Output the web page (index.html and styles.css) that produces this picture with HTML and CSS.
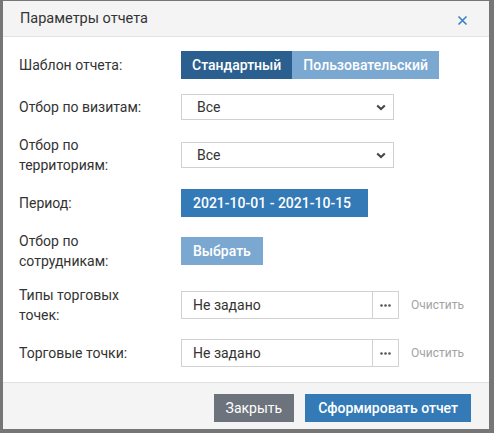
FILE: index.html
```html
<!DOCTYPE html>
<html lang="ru">
<head>
<meta charset="utf-8">
<link rel="stylesheet" href="styles.css">
</head>
<body>
<div class="dialog">
  <div class="dlg-header">
    <div class="dlg-title">Параметры отчета</div>
    <div class="dlg-close">
      <svg width="11" height="11" viewBox="0 0 11 11"><path d="M1.5 1.5 L9.5 9.5 M9.5 1.5 L1.5 9.5" stroke="#3b7fc4" stroke-width="1.6" fill="none"/></svg>
    </div>
  </div>
  <div class="dlg-body">
    <div class="row">
      <div class="label">Шаблон отчета:</div>
      <div class="control">
        <div class="btn-group">
          <span class="btn btn-dark">Стандартный</span><span class="btn btn-light">Пользовательский</span>
        </div>
      </div>
    </div>
    <div class="row">
      <div class="label">Отбор по визитам:</div>
      <div class="control">
        <div class="select"><span>Все</span>
          <svg width="10" height="7" viewBox="0 0 10 7"><path d="M1.2 1.4 L5 5 L8.8 1.4" stroke="#444" stroke-width="2" fill="none"/></svg>
        </div>
      </div>
    </div>
    <div class="row tall">
      <div class="label">Отбор по<br>территориям:</div>
      <div class="control">
        <div class="select"><span>Все</span>
          <svg width="10" height="7" viewBox="0 0 10 7"><path d="M1.2 1.4 L5 5 L8.8 1.4" stroke="#444" stroke-width="2" fill="none"/></svg>
        </div>
      </div>
    </div>
    <div class="row">
      <div class="label">Период:</div>
      <div class="control">
        <span class="btn btn-primary btn-period">2021-10-01 - 2021-10-15</span>
      </div>
    </div>
    <div class="row tall">
      <div class="label">Отбор по<br>сотрудникам:</div>
      <div class="control">
        <span class="btn btn-light">Выбрать</span>
      </div>
    </div>
    <div class="row tall">
      <div class="label">Типы торговых<br>точек:</div>
      <div class="control">
        <div class="input-group">
          <div class="input">Не задано</div>
          <div class="dots"><svg width="11" height="3" viewBox="0 0 11 3"><circle cx="1.5" cy="1.5" r="1.3" fill="#555"/><circle cx="5.5" cy="1.5" r="1.3" fill="#555"/><circle cx="9.5" cy="1.5" r="1.3" fill="#555"/></svg></div>
        </div>
        <span class="clear">Очистить</span>
      </div>
    </div>
    <div class="row">
      <div class="label">Торговые точки:</div>
      <div class="control">
        <div class="input-group">
          <div class="input">Не задано</div>
          <div class="dots"><svg width="11" height="3" viewBox="0 0 11 3"><circle cx="1.5" cy="1.5" r="1.3" fill="#555"/><circle cx="5.5" cy="1.5" r="1.3" fill="#555"/><circle cx="9.5" cy="1.5" r="1.3" fill="#555"/></svg></div>
        </div>
        <span class="clear">Очистить</span>
      </div>
    </div>
  </div>
  <div class="dlg-footer">
    <span class="btn btn-gray">Закрыть</span>
    <span class="btn btn-primary btn-submit">Сформировать отчет</span>
  </div>
</div>
</body>
</html>
```
FILE: styles.css
```css
html, body {
  margin: 0;
  padding: 0;
}
body {
  background: #767676;
  width: 494px;
  height: 433px;
  overflow: hidden;
  font-family: Roboto, "Liberation Sans", Arial, sans-serif;
  font-size: 14px;
  color: #333;
}
.dialog {
  margin: 1px 0 0 3px;
  width: 486px;
  height: 428px;
  background: #fff;
  display: flex;
  flex-direction: column;
}
.dlg-header {
  height: 35px;
  background: #f4f4f4;
  border-bottom: 1px solid #dfe4ea;
  display: flex;
  align-items: center;
  justify-content: space-between;
  padding: 0 21px 0 17px;
}
.dlg-title {
  font-size: 14.5px;
  color: #333;
}
.dlg-close {
  display: flex;
  padding-top: 3px;
}
.dlg-body {
  padding: 14px 0 15px 16px;
  display: flex;
  flex-direction: column;
  gap: 14px;
  border-bottom: 1px solid #e0e0e0;
}
.row {
  display: flex;
  align-items: center;
  height: 28px;
}
.row.tall {
  height: 40px;
}
.label {
  width: 162px;
  line-height: 20px;
}
.control {
  display: flex;
  align-items: center;
}
.btn-group {
  display: flex;
}
.btn {
  display: inline-flex;
  align-items: center;
  height: 28px;
  padding: 0 12px;
  color: #fff;
  font-weight: 500;
  box-sizing: border-box;
}
.btn-group .btn {
  padding: 0 11px;
}
.btn-dark {
  background: #2a5f8f;
}
.btn-light {
  background: #7ba8d1;
}
.btn-primary {
  background: #337ab7;
}
.btn-period {
  font-weight: 500;
  width: 187px;
}
.btn-gray {
  background: #6c737c;
  font-weight: 400;
}
.select {
  width: 213px;
  height: 26px;
  box-sizing: border-box;
  border: 1px solid #cdd2d9;
  display: flex;
  align-items: center;
  justify-content: space-between;
  padding: 0 7px 0 15px;
}
.input-group {
  display: flex;
  height: 28px;
}
.input {
  width: 191px;
  box-sizing: border-box;
  border: 1px solid #d2d2d2;
  border-right: none;
  display: flex;
  align-items: center;
  padding-left: 11px;
}
.dots {
  width: 27px;
  box-sizing: border-box;
  border: 1px solid #d2d2d2;
  display: flex;
  align-items: center;
  justify-content: center;
}
.clear {
  margin-left: 12px;
  font-size: 12px;
  color: #a3a3a3;
}
.dlg-footer {
  flex: 1;
  background: #f4f4f4;
  display: flex;
  justify-content: flex-end;
  align-items: flex-start;
  gap: 11px;
  padding: 11px 18px 0 0;
}
.dlg-footer .btn {
  padding: 0 12px;
}
.dlg-footer .btn-submit {
  padding: 0 13px;
}
```
